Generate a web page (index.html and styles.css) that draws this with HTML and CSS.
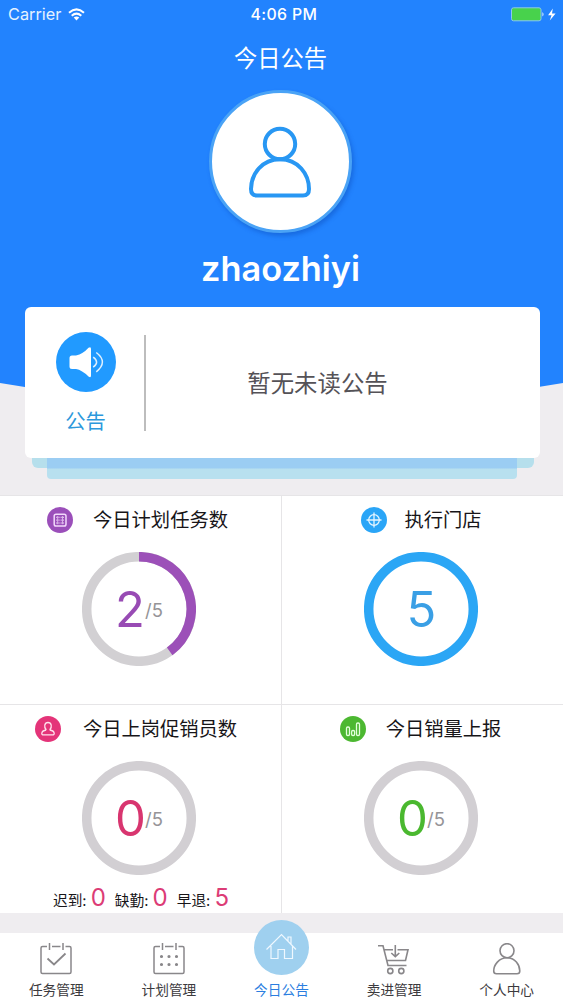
FILE: index.html
```html
<!DOCTYPE html>
<html lang="zh-CN">
<head>
<meta charset="utf-8">
<title>今日公告</title>
<link rel="stylesheet" href="styles.css">
</head>
<body>
<main class="app">
  <header class="hero">
    <svg class="hero-bg" viewBox="0 0 563 410" aria-hidden="true"><path d="M0 0H563V383Q281.500 431 0 383Z" fill="#2283fe"/></svg>
    <div class="status">
      <div class="status-left"><span class="carrier">Carrier</span>
        <svg width="17" height="13" viewBox="0 0 17 13" fill="none" stroke="#fff" stroke-width="2"><path d="M1 4.700Q8.500-2 16 4.700M3.700 7.700Q8.500 3.500 13.300 7.700"/><path d="M8.500 12.500L5.700 9.600Q8.500 7.300 11.300 9.600Z" fill="#fff" stroke="none"/></svg>
      </div>
      <span class="time">4:06 PM</span>
      <svg class="battery" width="47" height="15" viewBox="0 0 47 15"><rect x=".5" y=".8" width="29.500" height="13" rx="2" fill="#48d24c" stroke="#8bc7ee"/><path d="M31.300 5Q34 7.300 31.300 9.600Z" fill="#c5e2ff"/><path d="M41.800 1.500L37.100 8.300H40.500L38.800 13.600L44.600 6.500H41Z" fill="#fff"/></svg>
    </div>
    <h1 class="title">今日公告</h1>
    <div class="avatar"><svg width="64" height="74" viewBox="0 0 64 74" fill="none" stroke="#2897f3" stroke-width="4"><circle cx="32" cy="19" r="15.200"/><path d="M32 34.200C14 34.200 3 49 3 64Q3 70.500 9 70.500H55Q61 70.500 61 64C61 49 50 34.200 32 34.200Z"/></svg></div>
    <div class="name">zhaozhiyi</div>
    <section class="card">
      <div class="card-side">
        <svg width="60" height="60" viewBox="0 0 60 60"><circle cx="30" cy="30" r="30" fill="#219aff"/><path d="M16 23.500H20Q27 22 32.500 15.800Q35 14 35 17V43.500Q35 46.500 32.500 44.500Q26 38 20 37H16Q13.500 37 13.500 34.500V26Q13.500 23.500 16 23.500Z" fill="#fff"/><path d="M37.200 25.200Q44 30.200 37.200 35.200M40.300 20.500Q52.500 30 40.300 39.800" fill="none" stroke="#dff0ff" stroke-width="1.500"/></svg>
        <span>公告</span>
      </div>
      <div class="card-message">暂无未读公告</div>
    </section>
    <div class="layer layer-back"></div>
    <div class="layer layer-front"></div>
  </header>

  <section class="stats">
    <article class="stat">
      <h2 class="stat-head plan"><svg class="badge" viewBox="0 0 26 26" fill="none" stroke="#f3d9fb" stroke-width="1.500"><circle cx="13" cy="13" r="13" fill="#9b4fba" stroke="none"/><rect x="7.200" y="7.200" width="11.800" height="11.800" rx="1.800"/><path d="M10.700 9V17.200M15.500 9V17.200" stroke-width=".7"/><path d="M9.200 10.300H17M9.200 13.100H17M9.200 16H17" stroke-width="1" stroke-dasharray="1.200 1"/></svg><span>今日计划任务数</span></h2>
      <div class="ring"><svg viewBox="0 0 114 114" fill="none" stroke-width="9.500"><circle cx="57" cy="57" r="52.300" stroke="#d2d0d3"/><path d="M57 4.700A52.300 52.300 0 0 1 87.700 99.300" stroke="#9c50b8"/></svg><div class="value purple"><b>2</b><i>/5</i></div></div>
    </article>
    <article class="stat">
      <h2 class="stat-head store"><svg class="badge" viewBox="0 0 26 26" fill="none" stroke="#e5f5ff" stroke-width="1.300"><circle cx="13" cy="13" r="13" fill="#2aa5f7" stroke="none"/><circle cx="13" cy="13" r="5.300"/><path d="M13 5.500V20.500M5.500 13H20.500"/></svg><span>执行门店</span></h2>
      <div class="ring"><svg viewBox="0 0 114 114" fill="none" stroke-width="9.500"><circle cx="57" cy="57" r="52.300" stroke="#2ba6f5"/></svg><div class="value blue"><b>5</b></div></div>
    </article>
    <article class="stat">
      <h2 class="stat-head staff"><svg class="badge" viewBox="0 0 26 26" fill="none" stroke="#ffe1ed" stroke-width="1.300"><circle cx="13" cy="13" r="13" fill="#e43479" stroke="none"/><path d="M11.300 14C8.500 11 9.500 6.500 13 6.500S17.500 11 14.700 14M11.300 14Q7 14.700 6.800 17.200Q6.700 18.900 8.500 18.900H17.500Q19.300 18.900 19.200 17.200Q19 14.700 14.700 14"/></svg><span>今日上岗促销员数</span></h2>
      <div class="ring"><svg viewBox="0 0 114 114" fill="none" stroke-width="9.500"><circle cx="57" cy="57" r="52.300" stroke="#d2cfd3"/></svg><div class="value pink"><b class="zero">0</b><i>/5</i></div></div>
      <div class="attendance"><span>迟到: <em>0</em></span><span>缺勤: <em>0</em></span><span>早退: <em>5</em></span></div>
    </article>
    <article class="stat">
      <h2 class="stat-head sales"><svg class="badge" viewBox="0 0 26 26" fill="none" stroke="#e3ffdc" stroke-width="1.300"><circle cx="13" cy="13" r="13" fill="#4cb831" stroke="none"/><rect x="6.500" y="11" width="3" height="8.500" rx="1.300"/><rect x="11.600" y="14.500" width="3" height="5" rx="1.300"/><rect x="16.500" y="7" width="3" height="12.500" rx="1.300"/></svg><span>今日销量上报</span></h2>
      <div class="ring"><svg viewBox="0 0 114 114" fill="none" stroke-width="9.500"><circle cx="57" cy="57" r="52.300" stroke="#d2cfd3"/></svg><div class="value green"><b class="zero">0</b><i>/5</i></div></div>
    </article>
  </section>

  <nav class="tabs">
    <a class="tab"><svg width="32" height="32" viewBox="0 0 32 32" fill="none" stroke="#89878a" stroke-width="1.500"><path d="M7 3.500H2.500Q1 3.500 1 5V29Q1 30.500 2.500 30.500H29.500Q31 30.500 31 29V5Q31 3.500 29.500 3.500H25.500M12 3.500H20.500M9.500 0V7M23 0V7"/><path d="M7.500 15.500L14 21.500L25.500 10.500" stroke-width="1.800"/></svg><span>任务管理</span></a>
    <a class="tab"><svg width="32" height="32" viewBox="0 0 32 32" fill="none" stroke="#89878a" stroke-width="1.500"><path d="M7 3.500H2.500Q1 3.500 1 5V29Q1 30.500 2.500 30.500H29.500Q31 30.500 31 29V5Q31 3.500 29.500 3.500H25.500M12 3.500H20.500M9.500 0V7M23 0V7"/><path d="M8.500 13.500V13.510M16 13.500V13.510M23.500 13.500V13.510M8.500 21.500V21.510M16 21.500V21.510M23.500 21.500V21.510" stroke-width="3.200" stroke-linecap="round"/></svg><span>计划管理</span></a>
    <a class="tab active"><svg width="55" height="55" viewBox="0 0 55 55" fill="none" stroke="#eff8ff" stroke-width="1.200"><circle cx="27.500" cy="27.500" r="27.500" fill="#9fd0ef" stroke="none"/><path d="M12.500 29.500L27.500 14.500L42 29.500M17 26V38.500H24V29.500H30.500V38.500H38.500V26M34 21.500V17H37V24.500"/></svg><span>今日公告</span></a>
    <a class="tab"><svg width="32" height="32" viewBox="0 0 32 32" fill="none" stroke="#89878a" stroke-width="1.600"><path d="M0 2.800H5L10 22.500H28.500M6.500 6.800H15M19.500 6.800H30L27.500 17.500H9.200M17.300 2V13.500M13.300 10L17.300 13.700L21.300 10"/><circle cx="12.300" cy="28" r="2.600"/><circle cx="23.300" cy="28" r="2.600"/></svg><span>卖进管理</span></a>
    <a class="tab"><svg width="32" height="32" viewBox="0 0 32 32" fill="none" stroke="#89878a" stroke-width="1.600"><circle cx="16" cy="7.700" r="7"/><path d="M16 14.700C8 14.700 2.700 22 2.700 28Q2.700 30.800 5.500 30.800H26Q28.800 30.800 28.800 28C28.800 22 24 14.700 16 14.700Z"/></svg><span>个人中心</span></a>
  </nav>
</main>
</body>
</html>
```
FILE: styles.css
```css
* { box-sizing: border-box; }
body { margin: 0; background: #efedf0; font-family: Inter, "Noto Sans CJK SC", sans-serif; }
svg { display: block; flex: none; }
.app { width: 563px; height: 1000px; display: flex; flex-direction: column; overflow: hidden; }

.hero { position: relative; height: 495px; flex: none; display: flex; flex-direction: column; align-items: center; isolation: isolate; color: #fff; }
.hero-bg { position: absolute; z-index: -1; top: 0; left: 0; width: 563px; height: 410px; }
.status { width: 100%; height: 28px; padding: 0 5px 0 8px; display: grid; grid-template-columns: 1fr auto 1fr; align-items: center; font-size: 16px; line-height: 20px; }
.status-left { display: flex; align-items: center; gap: 7px; color: #e4f2ff; }
.carrier { font-size: 16.3px; }
.time { font-weight: 500; font-size: 15.8px; letter-spacing: .4px; padding: 1px 0 0 2px; }
.battery { justify-self: end; }
.title { margin: 14px 2px 0 0; height: 34px; font-size: 23.3px; line-height: 34px; font-weight: 400; }
.avatar { width: 143px; height: 143px; margin-top: 14px; margin-right: 3px; border: 3px solid #4aa3f6; border-radius: 50%; background: #fff; box-shadow: 2px 3px 4px rgba(10, 70, 180, .4); display: flex; align-items: center; justify-content: center; }
.name { height: 42px; margin: 15px 2px 0 0; font-size: 34.3px; line-height: 42px; font-weight: 600; }
.card { width: 515px; height: 151px; margin-top: 17px; margin-left: 1px; background: #fff; border-radius: 6px; display: flex; align-items: center; flex: none; }
.card-side { width: 121px; height: 96px; padding: 3px 0 0 3px; border-right: 2px solid #bdbdbd; display: flex; flex-direction: column; align-items: center; justify-content: center; color: #2b98dc; font-size: 20.3px; line-height: 30px; gap: 15px; }
.card-message { flex: 1; text-align: center; padding: 2px 50px 0 0; color: #555257; font-size: 23.4px; line-height: 34px; }
.layer { position: absolute; z-index: -1; }
.layer-back { top: 450px; left: 32px; width: 502px; height: 18px; background: #b6dfec; border-radius: 0 0 6px 6px; }
.layer-front { top: 458px; left: 47px; width: 470px; height: 21px; background: linear-gradient(#9bcdf3 0 10px, #b8e0ef 11px); border-radius: 0 0 4px 4px; }

.stats { display: grid; grid-template-columns: 282px 281px; grid-template-rows: 209px 209px; flex: none; }
.stat { background: #fff; border-top: 1px solid #e6e5e7; padding: 11px 3px 0 0; display: flex; flex-direction: column; align-items: center; }
.stat:nth-child(odd) { border-right: 1px solid #e6e5e7; padding-right: 3px; }
.stat-head { margin: 0; height: 26px; display: flex; align-items: center; font-size: 19.3px; line-height: 26px; font-weight: 400; color: #171518; }
.badge { width: 26px; height: 26px; }
.plan { gap: 20px; padding-right: 3px; }
.store { gap: 17px; padding-left: 1px; }
.staff { gap: 22px; padding-right: 6px; }
.sales { gap: 20px; padding-right: 1px; }
.ring { width: 114px; height: 114px; margin-top: 19px; display: grid; place-items: center; }
.ring > * { grid-area: 1 / 1; }
.ring svg { width: 114px; height: 114px; }
.value { display: flex; align-items: center; padding-top: 2px; }
.value b { font-size: 49px; font-weight: 400; line-height: 60px; letter-spacing: -1px; }
.value .zero { letter-spacing: -2px; }
.value i { font-size: 18.5px; font-style: normal; font-weight: 400; color: #969497; padding-left: 1px; }
.purple { color: #984bb4; }
.blue { color: #3a9fe5; }
.pink { color: #d8356f; }
.green { color: #4ab82f; }
.attendance { display: flex; gap: 9px; margin-top: 8px; padding-left: 4px; font-size: 14.7px; line-height: 30px; color: #171518; white-space: nowrap; }
.attendance em { font-style: normal; font-size: 24px; color: #dc3c76; line-height: 30px; }

.tabs { margin-top: 20px; height: 67px; flex: none; display: grid; grid-template-columns: repeat(5, 1fr); background: #fff; }
.tab { height: 67px; display: flex; flex-direction: column; align-items: center; justify-content: flex-end; gap: 5px; font-size: 13.7px; line-height: 20px; color: #3c3a3d; }
.active { color: #2b7ee0; }
```
